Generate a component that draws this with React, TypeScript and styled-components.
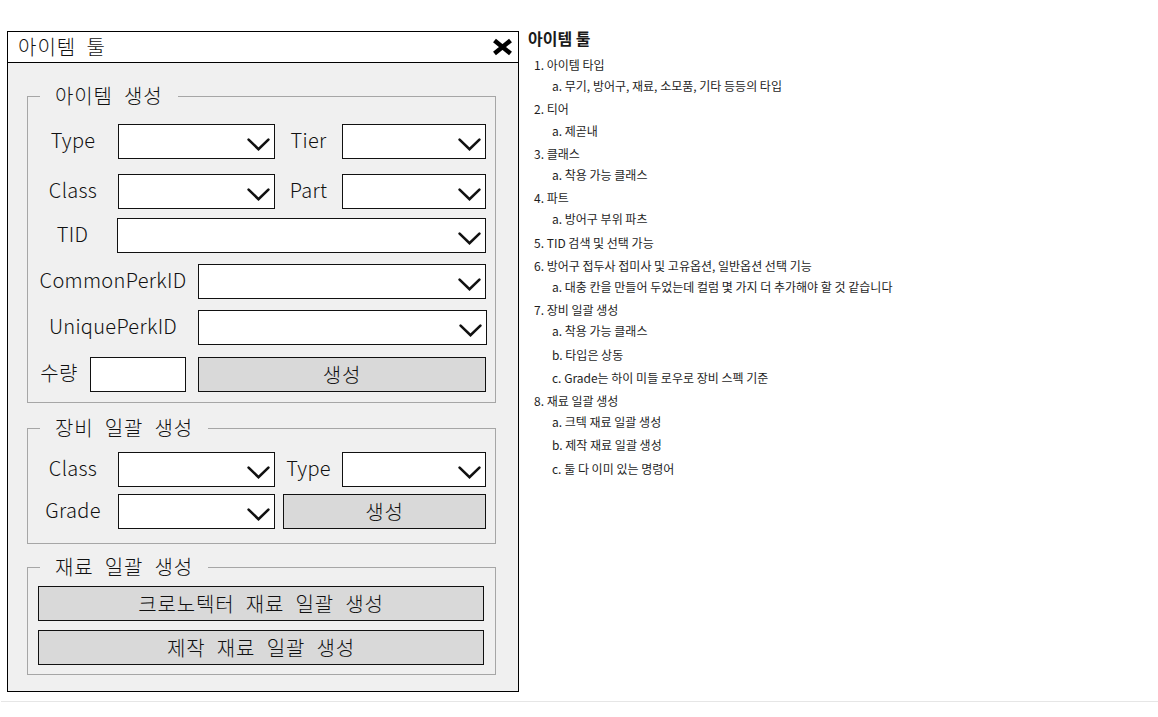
import React from "react";
import styled, { createGlobalStyle } from "styled-components";

const GlobalStyle = createGlobalStyle`
  html, body { margin: 0; padding: 0; background: #ffffff; }
  body { font-family: "Noto Sans CJK KR", "Noto Sans", sans-serif; }
  * { box-sizing: border-box; }
`;

const FORM_FONT = `"Noto Sans CJK KR", "Noto Sans", sans-serif`;

const Page = styled.div`
  width: 1158px;
  min-height: 717px;
  display: flex;
  flex-direction: column;
`;

const Main = styled.div`
  display: flex;
  align-items: flex-start;
  gap: 9px;
  padding: 28px 0 0 7px;
`;

const Window = styled.section`
  margin-top: 3px;
  width: 512px;
  height: 661px;
  border: 1px solid #000;
  background: #f0f0f0;
  display: flex;
  flex-direction: column;
`;

const TitleBar = styled.header`
  height: 31px;
  flex: none;
  border-bottom: 1px solid #000;
  background: #fff;
  display: flex;
  align-items: center;
  justify-content: space-between;
  padding: 0 5px 0 10px;
`;

const Title = styled.span`
  font-family: ${FORM_FONT};
  font-weight: 300;
  font-size: 20px;
  line-height: 24px;
  letter-spacing: 1px;
  word-spacing: 5px;
  color: #111;
`;

const CloseButton = styled.button`
  width: 21px;
  height: 18px;
  padding: 0;
  border: none;
  background: transparent;
  display: flex;
  align-items: center;
  justify-content: center;
`;

const Body = styled.div`
  flex: 1;
  display: flex;
  flex-direction: column;
  padding: 0 22px 0 19px;
`;

const Group = styled.fieldset<{ $top: number; $pt: number; $pb: number }>`
  margin: ${(p) => p.$top}px 0 0 0;
  padding: ${(p) => p.$pt}px 0 ${(p) => p.$pb}px 0;
  border: 1px solid #a6a6a6;
  min-width: 0;
  display: flex;
  flex-direction: column;
`;

const Legend = styled.legend`
  margin-left: 12px;
  padding: 0 15px;
  font-family: ${FORM_FONT};
  font-weight: 300;
  font-size: 20px;
  line-height: 24px;
  letter-spacing: 0.85px;
  word-spacing: 6px;
  color: #111;
`;

const FieldRow = styled.div<{ $top?: number }>`
  display: flex;
  align-items: center;
  height: 35px;
  margin-top: ${(p) => p.$top ?? 0}px;
`;

const Label = styled.span<{ $w: number }>`
  width: ${(p) => p.$w}px;
  flex: none;
  text-align: center;
  padding-bottom: 4px;
  font-family: ${FORM_FONT};
  font-weight: 300;
  font-size: 20px;
  line-height: 24px;
  letter-spacing: 0.3px;
  color: #111;
  white-space: nowrap;
`;

const SelectBox = styled.div<{ $w: number }>`
  width: ${(p) => p.$w}px;
  height: 35px;
  flex: none;
  border: 1px solid #111;
  background: #fff;
  display: flex;
  justify-content: flex-end;
  align-items: flex-end;
  padding: 0 4px 7px 0;
`;

const TextBox = styled.div<{ $w: number }>`
  width: ${(p) => p.$w}px;
  height: 35px;
  flex: none;
  border: 1px solid #111;
  background: #fff;
`;

const ActionButton = styled.button<{ $w: number; $left?: number }>`
  width: ${(p) => p.$w}px;
  height: 35px;
  flex: none;
  margin-left: ${(p) => p.$left ?? 0}px;
  padding: 0;
  border: 1px solid #111;
  background: #d9d9d9;
  font-family: ${FORM_FONT};
  font-weight: 300;
  font-size: 20px;
  line-height: 24px;
  letter-spacing: 0.85px;
  word-spacing: 6px;
  color: #111;
`;

const Doc = styled.article`
  color: #1e1e1e;
  font-family: "Noto Sans CJK KR", "Noto Sans", sans-serif;
`;

const DocTitle = styled.h2`
  margin: 0;
  font-size: 16px;
  font-weight: 700;
  line-height: 20px;
  color: #1a1a1a;
`;

const TopList = styled.ol`
  margin: 6px 0 0;
  padding: 0 0 0 6px;
  list-style: decimal inside;
  font-size: 12px;
  line-height: 21.2px;
  & > li + li { margin-top: 2px; }
`;

const SubList = styled.ol`
  margin: 0;
  padding: 0 0 0 18px;
  list-style: lower-alpha inside;
  & > li + li { margin-top: 2px; }
`;

const Divider = styled.div`
  margin: 9px 0 0 1px;
  height: 1px;
  background: #e6e6e6;
`;

const Chevron = () => (
  <svg width="23" height="13" viewBox="0 0 23 13" aria-hidden="true">
    <polyline
      points="1.6,1.6 11.5,11.2 21.4,1.6"
      fill="none"
      stroke="#111"
      strokeWidth="2.6"
      strokeLinecap="round"
      strokeLinejoin="miter"
    />
  </svg>
);

const CloseIcon = () => (
  <svg width="21" height="18" viewBox="0 0 21 18" aria-hidden="true">
    <path d="M2.5 2.5 L18.5 15.5 M18.5 2.5 L2.5 15.5" stroke="#000" strokeWidth="4.6" strokeLinecap="butt" />
  </svg>
);

const Select = ({ w }: { w: number }) => (
  <SelectBox $w={w} role="combobox">
    <Chevron />
  </SelectBox>
);

type DocItem = { text: string; subs?: string[] };

const docItems: DocItem[] = [
  { text: "아이템 타입", subs: ["무기, 방어구, 재료, 소모품, 기타 등등의 타입"] },
  { text: "티어", subs: ["제곧내"] },
  { text: "클래스", subs: ["착용 가능 클래스"] },
  { text: "파트", subs: ["방어구 부위 파츠"] },
  { text: "TID 검색 및 선택 가능" },
  {
    text: "방어구 접두사 접미사 및 고유옵션, 일반옵션 선택 기능",
    subs: ["대충 칸을 만들어 두었는데 컬럼 몇 가지 더 추가해야 할 것 같습니다"],
  },
  { text: "장비 일괄 생성", subs: ["착용 가능 클래스", "타입은 상동", "Grade는 하이 미들 로우로 장비 스펙 기준"] },
  { text: "재료 일괄 생성", subs: ["크텍 재료 일괄 생성", "제작 재료 일괄 생성", "둘 다 이미 있는 명령어"] },
];

export default function App() {
  return (
    <Page>
      <GlobalStyle />
      <Main>
        <Window>
          <TitleBar>
            <Title>아이템 툴</Title>
            <CloseButton aria-label="닫기">
              <CloseIcon />
            </CloseButton>
          </TitleBar>
          <Body>
            <Group $top={21} $pt={16} $pb={10}>
              <Legend>아이템 생성</Legend>
              <FieldRow>
                <Label $w={90}>Type</Label>
                <Select w={157} />
                <Label $w={67}>Tier</Label>
                <Select w={144} />
              </FieldRow>
              <FieldRow $top={15}>
                <Label $w={90}>Class</Label>
                <Select w={157} />
                <Label $w={67}>Part</Label>
                <Select w={144} />
              </FieldRow>
              <FieldRow $top={9}>
                <Label $w={89}>TID</Label>
                <Select w={369} />
              </FieldRow>
              <FieldRow $top={11}>
                <Label $w={170}>CommonPerkID</Label>
                <Select w={288} />
              </FieldRow>
              <FieldRow $top={11}>
                <Label $w={170}>UniquePerkID</Label>
                <Select w={289} />
              </FieldRow>
              <FieldRow $top={12}>
                <Label $w={62}>수량</Label>
                <TextBox $w={96} />
                <ActionButton $w={288} $left={12}>생성</ActionButton>
              </FieldRow>
            </Group>

            <Group $top={13} $pt={12} $pb={14}>
              <Legend>장비 일괄 생성</Legend>
              <FieldRow>
                <Label $w={90}>Class</Label>
                <Select w={157} />
                <Label $w={67}>Type</Label>
                <Select w={144} />
              </FieldRow>
              <FieldRow $top={7}>
                <Label $w={90}>Grade</Label>
                <Select w={157} />
                <ActionButton $w={203} $left={8}>생성</ActionButton>
              </FieldRow>
            </Group>

            <Group $top={11} $pt={7} $pb={9}>
              <Legend>재료 일괄 생성</Legend>
              <FieldRow>
                <ActionButton $w={446} $left={10}>크로노텍터 재료 일괄 생성</ActionButton>
              </FieldRow>
              <FieldRow $top={9}>
                <ActionButton $w={446} $left={10}>제작 재료 일괄 생성</ActionButton>
              </FieldRow>
            </Group>
          </Body>
        </Window>

        <Doc>
          <DocTitle>아이템 툴</DocTitle>
          <TopList>
            {docItems.map((item) => (
              <li key={item.text}>
                {item.text}
                {item.subs && (
                  <SubList>
                    {item.subs.map((s) => (
                      <li key={s}>{s}</li>
                    ))}
                  </SubList>
                )}
              </li>
            ))}
          </TopList>
        </Doc>
      </Main>
      <Divider />
    </Page>
  );
}
